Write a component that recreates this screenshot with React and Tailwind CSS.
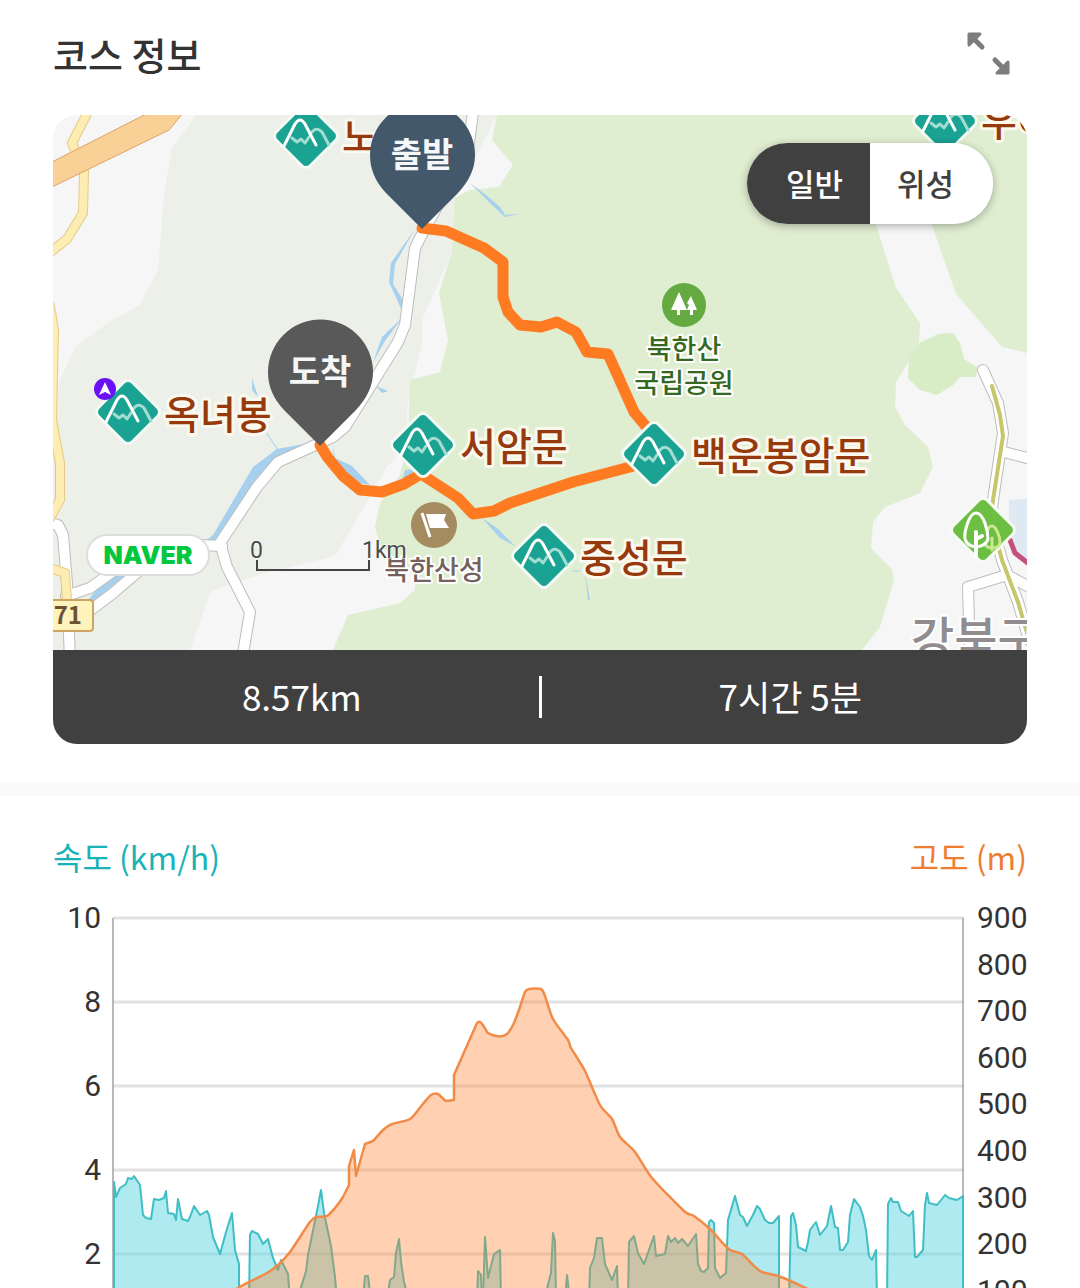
import React, { useState } from 'react';
import clsx from 'clsx';

const KR = "font-['Noto_Sans_CJK_KR',sans-serif]";

const ROUTE =
  '422,228 446,231 484,248 503,262 503,297 508,312 520,325 541,327 557,322 576,332 587,352 608,354 634,412 654,436 654,458 630,467 573,482 510,503 494,511 473,514 458,498 421,474 404,484 382,492 360,490 343,476 328,458 320,445';

const WHITE_ROADS = [
  '474,105 468,150 421,236 415,248 405,325 398,342 345,427 333,437 278,462 257,487 220,543 227,567 250,612 242,660',
  '222,546 200,545',
  '50,523 58,525 63,535 67,583 70,660',
  '66,596 90,588 115,570',
  '88,612 112,594 140,570',
  '1004,452 1035,460',
  '970,660 968,587 1007,575',
  '1007,575 1035,590',
  '983,370 998,403 1003,433 993,500 991,520 1002,560 1018,602 1029,640',
];

const YELLOW_ROADS = [
  '90,108 72,143 84,172 83,213 67,239 48,254',
  '50,306 54,330 52,420 60,463 60,500 50,518',
  '50,568 65,573 67,600',
];

const WATER = [
  '470,183 486,195 500,207 505,215 519,214 505,217 492,205',
  '415,229 391,263 389,282 403,313 403,300 393,284 395,264',
  '402,318 385,341 373,362 382,337',
  '320,441 277,449 253,467 213,535 205,541 222,541 257,478 280,455',
  '112,572 88,600 95,601 124,576',
  '252,378 258,397 252,390',
  '333,445 335,458 352,466 370,485 360,483 334,464',
  '376,386 388,391 382,393',
  '482,518 497,528 515,546 500,538',
  '585,573 590,600 588,600',
  '405,470 415,469 408,478 402,481',
];

// names run under the pins and the map edge
const MOUNTAINS = [
  { x: 306, y: 136, name: '노', tx: 342, ty: 151 },
  { x: 945, y: 121, name: '우이', tx: 981, ty: 136 },
  { x: 128, y: 412, name: '옥녀봉', tx: 164, ty: 429 },
  { x: 423, y: 445, name: '서암문', tx: 460, ty: 461 },
  { x: 654, y: 454, name: '백운봉암문', tx: 691, ty: 470 },
  { x: 544, y: 556, name: '중성문', tx: 580, ty: 572 },
];

// each run is one stretch of movement, the gaps are stops
const SPEED = [
  '114,1300 114,1182 116,1197 120,1188 126,1184 128,1178 132,1179 134,1176 140,1185 143,1215 146,1218 151,1219 154,1199 159,1200 164,1198 166,1191 168,1213 174,1214 176,1220 178,1199 182,1219 188,1221 190,1217 194,1206 200,1215 207,1211 209,1215 213,1237 220,1254 226,1232 232,1213 235,1250 239,1264 239,1300',
  '249,1300 250,1235 252,1231 258,1234 263,1244 268,1239 273,1258 278,1270 281,1260 288,1274 290,1300',
  '297,1300 306,1271 308,1255 318,1206 321,1190 324,1213 331,1246 335,1277 337,1300',
  '363,1300 365,1276 368,1276 371,1300',
  '387,1300 390,1280 394,1277 396,1253 399,1239 401,1262 404,1282 409,1300',
  '477,1300 478,1271 481,1275 482,1300',
  '483,1300 485,1237 488,1278 494,1254 500,1250 501,1300',
  '544,1300 551,1273 553,1233 555,1241 556,1300',
  '565,1300 567,1275 570,1300',
  '589,1300 590,1268 594,1258 597,1238 602,1238 605,1264 612,1280 617,1266 618,1300',
  '628,1300 629,1242 634,1236 638,1253 644,1264 650,1247 654,1236 656,1256 665,1254 668,1236 671,1242 675,1238 678,1243 682,1239 688,1246 696,1234 698,1264 701,1271 704,1272 708,1268 709,1222 711,1220 714,1223 715,1268 720,1278 726,1273 728,1220 735,1196 740,1215 743,1217 747,1226 753,1215 757,1206 760,1209 765,1220 769,1223 773,1223 779,1216 779,1300',
  '789,1300 791,1216 793,1213 796,1225 798,1247 802,1249 806,1251 808,1242 810,1230 816,1222 820,1235 827,1226 831,1206 835,1227 838,1228 840,1250 843,1250 848,1242 850,1215 854,1199 860,1207 863,1216 866,1230 869,1256 872,1260 876,1250 877,1300',
  '887,1300 888,1204 891,1198 893,1202 898,1202 901,1211 909,1216 913,1211 915,1257 917,1257 923,1250 925,1205 927,1193 929,1203 937,1205 945,1195 949,1198 957,1200 963,1196 963,1300',
];

const ALTITUDE =
  '225,1300 238,1288 255,1279 267,1273 278,1265 290,1252 300,1237 310,1222 316,1217 327,1216 335,1208 343,1197 349,1185 349,1166 354,1150 356,1176 365,1144 373,1141 383,1130 392,1124 410,1119 422,1105 431,1095 438,1094 446,1101 454,1100 454,1075 477,1023 488,1033 496,1036 503,1036 508,1033 514,1023 520,1007 525,992 529,989 541,989 545,996 553,1019 568,1040 571,1048 585,1071 600,1105 612,1119 620,1137 635,1152 652,1178 684,1211 694,1216 710,1229 720,1240 730,1250 742,1254 752,1264 762,1272 778,1276 795,1283 830,1300';

// rounds the corners of a point list, horizontal tangents kept short
function smooth(points) {
  const p = points.split(' ').map((s) => s.split(',').map(Number));
  let d = `M${p[0][0]} ${p[0][1]}`;
  for (let i = 0; i < p.length - 1; i++) {
    const a = p[i - 1] || p[i];
    const b = p[i];
    const c = p[i + 1];
    const e = p[i + 2] || c;
    const steep = (q, r) => Math.abs(r[1] - q[1]) > 3 * Math.abs(r[0] - q[0]);
    if (steep(b, c) || steep(a, b) || steep(c, e)) {
      d += `L${c[0]} ${c[1]}`;
      continue;
    }
    d += `C${b[0] + (c[0] - a[0]) / 8} ${b[1] + (c[1] - a[1]) / 8} ${c[0] - (e[0] - b[0]) / 8} ${c[1] - (e[1] - b[1]) / 8} ${c[0]} ${c[1]}`;
  }
  return d;
}

function ExpandIcon() {
  return (
    <svg viewBox="0 0 44 44" className="w-11 h-11" fill="#7d7d7d" stroke="#7d7d7d" strokeLinecap="round" strokeLinejoin="round">
      <path d="M2 2h11L2 13z" strokeWidth="3" />
      <path d="M6 6l9 9" strokeWidth="5" />
      <path d="M41 41H30l11-11z" strokeWidth="3" />
      <path d="M28 28l9 9" strokeWidth="5" />
    </svg>
  );
}

function MountainMarker({ x, y }) {
  return (
    <g transform={`translate(${x} ${y})`} fill="none" strokeLinecap="round" strokeLinejoin="round">
      <rect x="-24" y="-24" width="48" height="48" rx="6" transform="rotate(45)" fill="#1aa393" stroke="#f3fbf4" strokeWidth="3" />
      <path d="M4 -2L7 -5Q11 -9 16 -4L23 9" stroke="#a3ddd2" strokeWidth="3" />
      <path d="M-14 2l5 4 4-3 4 4 4-6" stroke="#a3ddd2" strokeWidth="3" />
      <path d="M-22 10L-11 -12Q-6 -20 -1 -12L10 9" stroke="#fff" strokeWidth="3" />
    </g>
  );
}

function Pin({ x, y, color, label }) {
  return (
    <g transform={`translate(${x} ${y})`}>
      <path d="M0 0L-36 -36C-47 -48 -52 -60 -52 -74A52 52 0 0 1 53 -74C53 -60 47 -48 36 -36Z" fill={color} />
      <text x="0" y="-62" textAnchor="middle" className="text-[34px] font-bold" fill="#f4f6f8">{label}</text>
    </g>
  );
}

function CourseMap() {
  return (
    <svg viewBox="53 115 974 535" className={`block w-full h-auto ${KR}`} role="img" aria-label="코스 지도">
      <rect x="53" y="115" width="974" height="535" fill="#f6f6f6" />
      <path d="M196 115L172 148 164 195 158 270 140 305 112 320 75 347 60 380 53 420V650H190L211 591 262 574 335 556 368 500 387 467 405 447 408 400 422 345V320L450 256 456 190 474 160 497 115Z" fill="#ecf0e9" />
      <path d="M497 115L492 140 513 165 499 187 470 190 455 198 451 255 439 293 448 340 440 372 410 380 408 440 400 475 380 503 375 527 380 545 415 577V590L400 603 348 615 333 650H862L880 627 894 580 892 569 871 548 873 522 885 507 920 493 933 467 928 447 905 425 895 407 896 382 908 363 919 343 920 323 896 288 878 231 868 205H925L934 231 956 294 1002 347 1027 353V115Z" fill="#dfedd0" />
      <path d="M938 334L953 333 960 343 964 359 978 368 975 377 960 377 953 385 937 395 920 390 908 378 909 360 919 343Z" fill="#d8ecc6" />
      <path d="M1009 500L1027 499V560L1009 545Z" fill="#dfe9f4" />

      {WATER.map((p) => (
        <polygon key={p} points={p} fill="#a6d0ee" />
      ))}
      <path d="M266 432L278 450M572 571h8" stroke="#a6d0ee" strokeWidth="1" />

      <g fill="none" strokeLinejoin="round" strokeLinecap="round">
        {WHITE_ROADS.map((p) => (
          <polyline key={p} points={p} stroke="#bdbdbd" strokeWidth="12" />
        ))}
        {WHITE_ROADS.map((p) => (
          <polyline key={p} points={p} stroke="#fff" strokeWidth="10" />
        ))}
        {YELLOW_ROADS.map((p) => (
          <polyline key={p} points={p} stroke="#e3cb86" strokeWidth="10" />
        ))}
        {YELLOW_ROADS.map((p) => (
          <polyline key={p} points={p} stroke="#fdedb2" strokeWidth="8" />
        ))}
        <polyline points="992,386 1000,415 1003,436 993,500 991,520 1002,560 1018,602 1029,640" stroke="#c9c56b" strokeWidth="4" />
        <path d="M1010 540L1015 553 1029 564" stroke="#c4517b" strokeWidth="5" />
      </g>
      <path d="M50 163L150 112H184L169 130 50 188Z" fill="#f9d197" stroke="#dba467" />

      <rect x="38" y="600" width="55" height="31" rx="3" fill="#fdf3bb" stroke="#cfa566" strokeWidth="2" />
      <text x="82" y="624" textAnchor="end" className="text-[24px] font-bold" fill="#6b5433">371</text>

      <text x="911" y="656" className="text-[47px] font-medium" fill="#918c8d" stroke="#fff" strokeWidth="4" paintOrder="stroke">
        강북구
      </text>

      <polyline points={ROUTE} fill="none" stroke="#ff7b22" strokeWidth="11" strokeLinejoin="round" strokeLinecap="round" />

      {/* park and fortress */}
      <circle cx="684" cy="305" r="22" fill="#65aa41" />
      <path d="M679 292l8 18h-7v5h-3v-5h-6zM691 296l6 14h-4v5h-3v-5h-3l2-5-2-2z" fill="#fff" />
      <circle cx="434" cy="525" r="23" fill="#a58b60" />
      <path d="M426 514l20 0-2 6 5 8h-19z" fill="#fff" />
      <path d="M422 513l8 24" stroke="#fff" strokeWidth="3" />
      <g className="text-[27px] font-medium" textAnchor="middle" stroke="#fff" strokeWidth="4" strokeLinejoin="round" paintOrder="stroke">
        <text x="684" y="359" fill="#34691f">북한산</text>
        <text x="684" y="393" fill="#34691f">국립공원</text>
        <text x="434" y="580" fill="#75625c">북한산성</text>
      </g>

      {MOUNTAINS.map((m) => (
        <g key={m.name}>
          <MountainMarker x={m.x} y={m.y} />
          <text x={m.tx} y={m.ty} className="text-[39px] font-medium" fill="#963a0e" stroke="#fbf8ee" strokeWidth="6" strokeLinejoin="round" paintOrder="stroke">
            {m.name}
          </text>
        </g>
      ))}

      <circle cx="105" cy="389" r="11" fill="#6a11f5" />
      <path d="M105 382l6 13-6-3-6 3z" fill="#fff" />

      {/* forest marker */}
      <g transform="translate(983 530)" fill="none" strokeLinecap="round">
        <rect x="-24" y="-24" width="48" height="48" rx="6" transform="rotate(45)" fill="#6cbf43" stroke="#f7fcf3" strokeWidth="3" />
        <path d="M9 -4C4 -4 1 9 2 13Q3 18 9 18 17 18 17 12C17 7 13 -4 9 -4ZM9 8V20" stroke="#cbe88f" strokeWidth="3" />
        <path d="M-7 -17C-14 -17 -19 2 -18 9Q-16 16 -7 17 3 16 5 9C5 2 1 -17 -7 -17Z" fill="#6cbf43" stroke="#fff" strokeWidth="3" />
        <path d="M-7 2V26M-7 9L-1 6" stroke="#fff" strokeWidth="4" />
      </g>

      <Pin x={422} y={229} color="#44586b" label="출발" />
      <Pin x={320} y={446} color="#595959" label="도착" />

      {/* scale */}
      <path d="M257 560V570H369V560" fill="none" stroke="#444" strokeWidth="2" />
      <g className="font-[Roboto,sans-serif] text-[23px]" fill="#4a4a4a" stroke="#fff" strokeWidth="1" paintOrder="stroke">
        <text x="250" y="558">0</text>
        <text x="362" y="558">1km</text>
      </g>

      <rect x="87" y="535" width="122" height="40" rx="20" fill="#fff" stroke="#dcdedc" strokeWidth="2" />
      <text x="148" y="564" textAnchor="middle" className="font-[Inter,sans-serif] text-[25px] font-black" fill="#03c73c">NAVER</text>
    </svg>
  );
}

function MapTypeToggle({ value, onChange }) {
  const types = [
    { id: 'normal', label: '일반', pad: 'pl-3' },
    { id: 'satellite', label: '위성', pad: 'pr-3' },
  ];
  return (
    <div className="absolute top-7 right-[34px] flex w-[246px] h-[81px] rounded-full overflow-hidden bg-white shadow-[0_2px_8px_rgba(0,0,0,0.3)]">
      {types.map((t) => (
        <button
          key={t.id}
          type="button"
          aria-pressed={value === t.id}
          onClick={() => onChange(t.id)}
          className={clsx(
            'w-1/2 pb-0.5 text-[31px] leading-10 font-medium cursor-pointer',
            t.pad,
            value === t.id ? 'bg-[#404040] text-white' : 'bg-white text-[#404040]'
          )}
        >
          {t.label}
        </button>
      ))}
    </div>
  );
}

function CourseChart() {
  const altitude = smooth(ALTITUDE);
  return (
    <svg viewBox="53 900 974 388" className="block w-full h-auto" role="img" aria-label="속도와 고도 그래프">
      {[918, 1002, 1086, 1170, 1254].map((y) => (
        <path key={y} d={`M113 ${y}H964`} stroke="#e2e2e2" strokeWidth="3" />
      ))}
      <path d="M113 918V1300M963 918V1300" stroke="#a3a3a3" strokeWidth="1.5" />
      {SPEED.map((p) => (
        <polyline key={p} points={p} fill="#5dd5df" fillOpacity="0.5" stroke="#3fbfc4" strokeWidth="2" strokeLinejoin="round" />
      ))}
      <path d={altitude} fill="#ff7b22" fillOpacity="0.35" />
      <path d={altitude} fill="none" stroke="#f08c48" strokeWidth="2.5" strokeLinejoin="round" />

      <g className="font-[Roboto,sans-serif] text-[30px]" fill="#333">
        {[10, 8, 6, 4, 2].map((v, i) => (
          <text key={v} x="101" y={928 + i * 84} textAnchor="end">{v}</text>
        ))}
      </g>
      <g className="font-[Roboto,sans-serif] text-[30px]" fill="#333">
        {[900, 800, 700, 600, 500, 400, 300, 200, 100].map((v, i) => (
          <text key={v} x="977" y={928 + i * 46.6}>{v}</text>
        ))}
      </g>
    </svg>
  );
}

export default function App() {
  const [mapType, setMapType] = useState('normal');

  return (
    <div className={`w-full bg-white text-[#333] ${KR}`}>
      <section className="px-[53px] pb-[39px]">
        <header className="h-[115px] pt-8 pr-4 flex items-start justify-between">
          <h1 className="text-[38px] leading-[44px] font-medium">코스 정보</h1>
          <button type="button" aria-label="지도 확대" className="cursor-pointer">
            <ExpandIcon />
          </button>
        </header>

        <div className="relative rounded-3xl overflow-hidden">
          <CourseMap />
          <MapTypeToggle value={mapType} onChange={setMapType} />
          <div className="h-[94px] bg-[#404040] text-white text-[35px] leading-[48px] flex items-center text-center">
            <span className="flex-1 pl-3 pb-0.5">8.57km</span>
            <span className="w-[3px] h-[42px] bg-white" />
            <span className="flex-1 pl-3 pb-0.5">7시간 5분</span>
          </div>
        </div>
      </section>

      <div className="h-[13px] bg-[#fafafa]" />

      <section className="px-[53px]">
        <div className="h-[104px] pt-9 flex justify-between text-[32px] leading-[48px]">
          <span className="text-[#18b3b7]">속도 (km/h)</span>
          <span className="text-[#ee7d31]">고도 (m)</span>
        </div>
        <CourseChart />
      </section>
    </div>
  );
}
